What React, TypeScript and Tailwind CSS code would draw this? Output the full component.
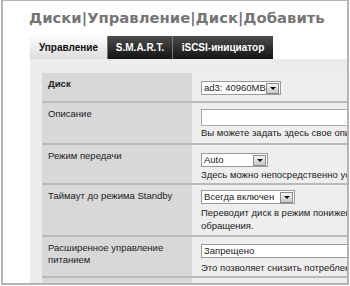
import type { ReactNode } from 'react';

/* ---- small pieces ------------------------------------------------------ */
function Arrow() {
  return (
    <span className="ml-auto mr-[1px] flex h-[11px] w-[13px] shrink-0 items-center justify-center border border-[#8a8a8a] bg-gradient-to-b from-[#f4f4f4] to-[#c9c9c9]">
      <svg width="6" height="3" viewBox="0 0 6 3">
        <path d="M0 0h6L3 3z" fill="#111" />
      </svg>
    </span>
  );
}

function Select({ value, width }: { value: string; width: string }) {
  return (
    <div className={`flex h-[14px] items-center border border-[#9a9a9a] bg-white pl-[2px] ${width}`}>
      <span className="leading-[12px] whitespace-nowrap">{value}</span>
      <Arrow />
    </div>
  );
}

function Row({ label, bold, height, children }: { label: ReactNode; bold?: boolean; height: string; children: ReactNode }) {
  return (
    <div className={`flex border-b-2 border-[#bababa] ${height}`}>
      <div className={`w-[150px] shrink-0 bg-[#d8d8d8] pl-[6px] pt-[5px] leading-[12px] ${bold ? 'font-bold' : ''}`}>
        {label}
      </div>
      <div className="flex-1 bg-[#eeeeee] pl-[9px]">{children}</div>
    </div>
  );
}

export default function App() {
  return (
    <div className="h-[286px] w-[350px] bg-white pl-[1px]">
      <div className="h-[285px] w-[348px] overflow-hidden border-x-2 border-t border-b-2 border-[#b4b4b4] font-['Liberation_Sans',Arial,sans-serif] text-[9.5px] text-[#222]">
        {/* breadcrumb title */}
        <h1 className="pl-[26px] pt-[8px] font-['DejaVu_Sans',sans-serif] text-[14.8px] leading-[18px] font-bold whitespace-nowrap text-[#767676]">
          Диски|Управление|Диск|Добавить
        </h1>

        {/* tabs */}
        <div className="mt-[9px] ml-[26px] flex h-[23px] text-[10px] font-bold">
          <div className="flex w-[78px] items-center justify-center border-l border-[#f8f8f8] bg-gradient-to-b from-[#fdfdfd] to-[#dcdcdc] text-[#111]">
            Управление
          </div>
          <div className="flex w-[65px] items-center justify-center border-l border-[#777] bg-gradient-to-b from-[#4e4e4e] to-[#141414] text-white">
            S.M.A.R.T.
          </div>
          <div className="flex w-[101px] items-center justify-center border-l border-[#777] bg-gradient-to-b from-[#4e4e4e] to-[#141414] text-white">
            iSCSI-инициатор
          </div>
        </div>

        {/* panel */}
        <div className="ml-[27px] w-[400px] bg-[#ececec] pt-[14px] pl-[12px]">
          <Row label="Диск" bold height="h-[30px]">
            <div className="pt-[8px]">
              <Select value="ad3: 40960MB" width="w-[80px]" />
            </div>
          </Row>

          <Row label="Описание" height="h-[42px]">
            <div className="pt-[6px]">
              <div className="h-[17px] w-[220px] border border-[#a8a8a8] bg-white" />
              <p className="pt-[1px] leading-[12px] whitespace-nowrap">Вы можете задать здесь свое описание диска.</p>
            </div>
          </Row>

          <Row label="Режим передачи" height="h-[40px]">
            <div className="pt-[8px]">
              <Select value="Auto" width="w-[67px]" />
              <p className="pt-[2px] leading-[12px] whitespace-nowrap">Здесь можно непосредственно установить режим передачи.</p>
            </div>
          </Row>

          <Row label="Таймаут до режима Standby" height="h-[52px]">
            <div className="pt-[5px]">
              <Select value="Всегда включен" width="w-[94px]" />
              <p className="pt-[2px] leading-[13px] whitespace-nowrap">
                Переводит диск в режим пониженного энергопотребления при отсутствии
                <br />
                обращения.
              </p>
            </div>
          </Row>

          <Row
            label={
              <>
                Расширенное управление
                <br />
                питанием
              </>
            }
            height="h-[41px]"
          >
            <div className="pt-[7px]">
              <div className="flex h-[14px] w-[220px] items-center border border-[#9a9a9a] bg-white pl-[2px] leading-[12px]">
                Запрещено
              </div>
              <p className="pt-[4px] leading-[12px] whitespace-nowrap">Это позволяет снизить потребление энергии диском.</p>
            </div>
          </Row>

          <Row label="Акустический уровень" height="h-[30px]">
            <div className="pt-[7px]" />
          </Row>
        </div>
      </div>
    </div>
  );
}
